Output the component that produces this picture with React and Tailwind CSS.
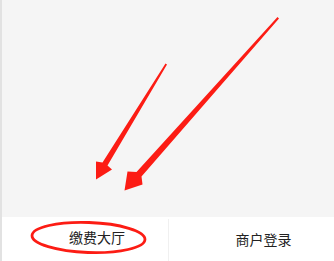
import React from "react";

const font = { fontFamily: '"Noto Sans CJK SC", "Noto Sans", sans-serif' };

export default function App() {
  return (
    <div
      className="relative w-[334px] h-[261px] flex flex-col bg-white border-l-2 border-[#e2e2e2] overflow-hidden"
      style={font}
    >
      <div className="flex-1 bg-[#f5f5f5]" />
      <div className="h-[44px] flex bg-white text-[14px] text-[#222]">
        <div className="w-[166px] flex items-center justify-center pl-6 pb-[3px]">缴费大厅</div>
        <div className="flex-1 flex items-center justify-center pl-6 pb-[1px] border-l border-[#f0f0f0] mt-[2px]">
          商户登录
        </div>
      </div>

      {/* red annotations drawn over the screenshot */}
      <svg
        className="absolute left-[-2px] top-0 pointer-events-none"
        width="334"
        height="261"
        viewBox="0 0 334 261"
      >
        <polygon
          fill="#fc1c14"
          points="165.5,63.5 167,64.5 107.5,165.5 112,169.5 96,179.5 96,161.5 102.5,162.5"
        />
        <polygon
          fill="#fc1c14"
          points="277.5,17 279,18.5 141.5,176.5 142.5,184.5 124.5,190.5 127.5,171.5 136.5,172"
        />
        <ellipse
          cx="88.5"
          cy="237.5"
          rx="56.5"
          ry="15"
          fill="none"
          stroke="#fc1c14"
          strokeWidth="2.8"
          transform="rotate(2 88.5 237.5)"
        />
      </svg>
    </div>
  );
}
